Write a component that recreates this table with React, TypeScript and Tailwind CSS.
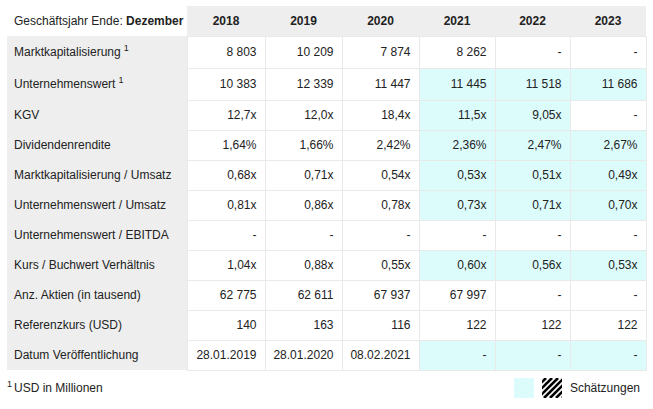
type Cell = { v: string; est?: boolean };
type Row = { label: string; sup?: boolean; cells: Cell[] };

const years = ["2018", "2019", "2020", "2021", "2022", "2023"];

const c = (v: string, est = false): Cell => ({ v, est });

const rows: Row[] = [
  { label: "Marktkapitalisierung", sup: true, cells: [c("8 803"), c("10 209"), c("7 874"), c("8 262"), c("-"), c("-")] },
  { label: "Unternehmenswert", sup: true, cells: [c("10 383"), c("12 339"), c("11 447"), c("11 445", true), c("11 518", true), c("11 686", true)] },
  { label: "KGV", cells: [c("12,7x"), c("12,0x"), c("18,4x"), c("11,5x", true), c("9,05x", true), c("-")] },
  { label: "Dividendenrendite", cells: [c("1,64%"), c("1,66%"), c("2,42%"), c("2,36%", true), c("2,47%", true), c("2,67%", true)] },
  { label: "Marktkapitalisierung / Umsatz", cells: [c("0,68x"), c("0,71x"), c("0,54x"), c("0,53x", true), c("0,51x", true), c("0,49x", true)] },
  { label: "Unternehmenswert / Umsatz", cells: [c("0,81x"), c("0,86x"), c("0,78x"), c("0,73x", true), c("0,71x", true), c("0,70x", true)] },
  { label: "Unternehmenswert / EBITDA", cells: [c("-"), c("-"), c("-"), c("-"), c("-"), c("-")] },
  { label: "Kurs / Buchwert Verhältnis", cells: [c("1,04x"), c("0,88x"), c("0,55x"), c("0,60x", true), c("0,56x", true), c("0,53x", true)] },
  { label: "Anz. Aktien (in tausend)", cells: [c("62 775"), c("62 611"), c("67 937"), c("67 997"), c("-"), c("-")] },
  { label: "Referenzkurs (USD)", cells: [c("140"), c("163"), c("116"), c("122"), c("122"), c("122")] },
  { label: "Datum Veröffentlichung", cells: [c("28.01.2019"), c("28.01.2020"), c("08.02.2021"), c("-", true), c("-", true), c("-", true)] },
];

const colWidths = ["w-[78px]", "w-[77px]", "w-[77px]", "w-[76px]", "w-[75px]", "w-[76px]"];

function Hatch() {
  return (
    <svg width="20" height="20" viewBox="0 0 20 20">
      <defs>
        <clipPath id="hb">
          <rect x="0" y="0" width="20" height="20" />
        </clipPath>
      </defs>
      <g clipPath="url(#hb)" stroke="#000" strokeWidth="2.6">
        {[-16, -10, -4, 2, 8, 14, 20, 26, 32].map((o) => (
          <line key={o} x1={o} y1={20} x2={o + 20} y2={0} />
        ))}
      </g>
    </svg>
  );
}

export default function App() {
  return (
    <div className="w-[653px] h-[409px] bg-white pl-[7px] pt-[6px] font-['Liberation_Sans',Arial,sans-serif] text-[12px] text-[#222]">
      <table className="border-collapse table-fixed w-[639px]">
        <colgroup>
          <col className="w-[180px]" />
          {colWidths.map((w, i) => (
            <col key={i} className={w} />
          ))}
        </colgroup>
        <thead>
          <tr className="h-[30px]">
            <th className="bg-white text-left font-normal pl-[7px] p-0 whitespace-nowrap">
              Geschäftsjahr Ende: <span className="font-bold">Dezember</span>
            </th>
            {years.map((y) => (
              <th key={y} className="bg-[#eeeeee] text-center font-bold p-0">
                {y}
              </th>
            ))}
          </tr>
        </thead>
        <tbody>
          {rows.map((r, ri) => (
            <tr key={r.label} className={ri < 2 ? "h-[32px]" : "h-[30px]"}>
              <td className="bg-[#eeeeee] pl-[7px] p-0 whitespace-nowrap">
                {r.label}
                {r.sup ? <sup className="text-[9px] ml-[3px] -top-[5px]">1</sup> : null}
              </td>
              {r.cells.map((cell, ci) => (
                <td
                  key={ci}
                  className={`border border-[#e9e9e9] text-right pr-[8px] p-0 whitespace-nowrap ${
                    cell.est ? "bg-[#dcfcfc]" : "bg-white"
                  }`}
                >
                  {cell.v}
                </td>
              ))}
            </tr>
          ))}
        </tbody>
      </table>
      <div className="flex items-center justify-between w-[639px] mt-[7px]">
        <div>
          <sup className="text-[9px] mr-[2px] -top-[5px]">1</sup>USD in Millionen
        </div>
        <div className="flex items-center gap-[8px] pr-[6px]">
          <div className="w-[20px] h-[20px] bg-[#dcfcfc]" />
          <Hatch />
          <span>Schätzungen</span>
        </div>
      </div>
    </div>
  );
}
